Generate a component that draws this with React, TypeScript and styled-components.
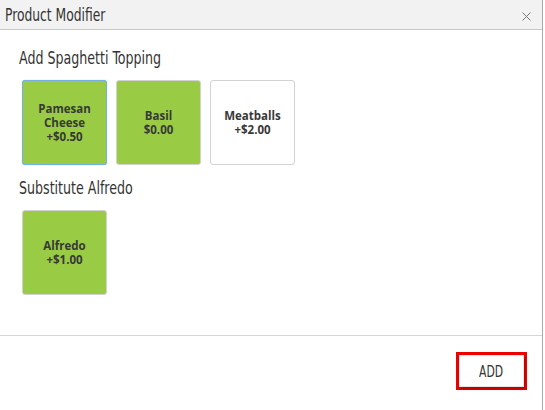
import React from "react";
import styled, { createGlobalStyle, css } from "styled-components";

const Global = createGlobalStyle`
  html, body { margin: 0; padding: 0; background: #ffffff; }
  body { width: 545px; height: 410px; overflow: hidden; }
  #root { width: 545px; height: 410px; }
`;

const condensed = `"DejaVu Sans Condensed", "Liberation Sans Narrow", "Liberation Sans", sans-serif`;

const Narrow = styled.span<{ $scale?: number; $origin?: string }>`
  display: inline-block;
  white-space: nowrap;
  transform: scaleX(${(p) => p.$scale ?? 0.77});
  transform-origin: ${(p) => p.$origin ?? "left center"};
`;

const Dialog = styled.div`
  width: 543px;
  height: 410px;
  box-sizing: border-box;
  border-right: 1px solid #a9a9a9;
  background: #fff;
  display: flex;
  flex-direction: column;
`;

const Header = styled.div`
  height: 30px;
  box-sizing: border-box;
  background: #f2f2f2;
  border-bottom: 1px solid #c8c8c8;
  display: flex;
  align-items: center;
  justify-content: space-between;
  padding: 0 10px 0 5px;
`;

const Title = styled.h1`
  margin: 0;
  font-family: ${condensed};
  font-weight: 400;
  font-size: 18px;
  color: #333;
`;

const Close = styled.button`
  border: none;
  background: transparent;
  padding: 0;
  margin-top: 3px;
  width: 12px;
  height: 12px;
  display: flex;
  align-items: center;
  justify-content: center;
  cursor: pointer;
`;

const Body = styled.div`
  flex: 0 0 auto;
  height: 306px;
  box-sizing: border-box;
  padding: 17px 19px 0;
  border-bottom: 1px solid #d6d6d6;
`;

const SectionTitle = styled.h2`
  margin: 0 0 11px;
  font-family: ${condensed};
  font-weight: 400;
  font-size: 18px;
  line-height: 22px;
  color: #333;
`;

const Tiles = styled.div`
  display: flex;
  gap: 9px;
  padding-left: 3px;
  margin-bottom: 12px;
`;

const Tile = styled.div<{ $selected?: boolean; $focused?: boolean }>`
  width: 85px;
  height: 85px;
  box-sizing: border-box;
  border-radius: 3px;
  border: 1px solid ${(p) => (p.$focused ? "#72b0e6" : "#d2d2d2")};
  background: ${(p) => (p.$selected ? "#99cc44" : "#ffffff")};
  display: flex;
  flex-direction: column;
  align-items: center;
  justify-content: center;
  text-align: center;
  font-family: "Open Sans", "Noto Sans", sans-serif;
  font-weight: 700;
  font-size: 11.5px;
  color: #383838;
  ${(p) =>
    p.$focused &&
    css`
      box-shadow: 0 0 1px #72b0e6;
    `}
`;

const TileLine = styled.span`
  display: block;
  height: 14px;
  line-height: 14px;
`;

const Footer = styled.div`
  flex: 1;
  display: flex;
  justify-content: flex-end;
  align-items: flex-start;
  padding: 16px 15px 0 0;
`;

const AddWrap = styled.div`
  border: 3px solid #ee0000;
`;

const AddButton = styled.button`
  width: 65px;
  height: 32px;
  border: 1px solid #e6e6e6;
  background: #fff;
  box-shadow: 1px 2px 3px rgba(0, 0, 0, 0.25);
  font-family: ${condensed};
  font-size: 16px;
  color: #333;
  cursor: pointer;
  padding: 0;
  display: flex;
  align-items: center;
  justify-content: center;
`;

type Item = { name: string[]; price: string; selected?: boolean; focused?: boolean };

const groups: { title: string; items: Item[] }[] = [
  {
    title: "Add Spaghetti Topping",
    items: [
      { name: ["Pamesan", "Cheese"], price: "+$0.50", selected: true, focused: true },
      { name: ["Basil"], price: "$0.00", selected: true },
      { name: ["Meatballs"], price: "+$2.00" },
    ],
  },
  {
    title: "Substitute Alfredo",
    items: [{ name: ["Alfredo"], price: "+$1.00", selected: true }],
  },
];

export default function App() {
  return (
    <>
      <Global />
      <Dialog>
        <Header>
          <Title>
            <Narrow $scale={0.76}>Product Modifier</Narrow>
          </Title>
          <Close aria-label="close">
            <svg width="9" height="9" viewBox="0 0 9 9">
              <path d="M0.5 0.5L8.5 8.5M8.5 0.5L0.5 8.5" stroke="#777" strokeWidth="1" />
            </svg>
          </Close>
        </Header>
        <Body>
          {groups.map((g) => (
            <div key={g.title}>
              <SectionTitle>
                <Narrow $scale={0.78}>{g.title}</Narrow>
              </SectionTitle>
              <Tiles>
                {g.items.map((it) => (
                  <Tile key={it.price + it.name[0]} $selected={it.selected} $focused={it.focused}>
                    {it.name.map((n) => (
                      <TileLine key={n}>{n}</TileLine>
                    ))}
                    <TileLine>{it.price}</TileLine>
                  </Tile>
                ))}
              </Tiles>
            </div>
          ))}
        </Body>
        <Footer>
          <AddWrap>
            <AddButton>
              <Narrow $scale={0.75} $origin="center">ADD</Narrow>
            </AddButton>
          </AddWrap>
        </Footer>
      </Dialog>
    </>
  );
}
